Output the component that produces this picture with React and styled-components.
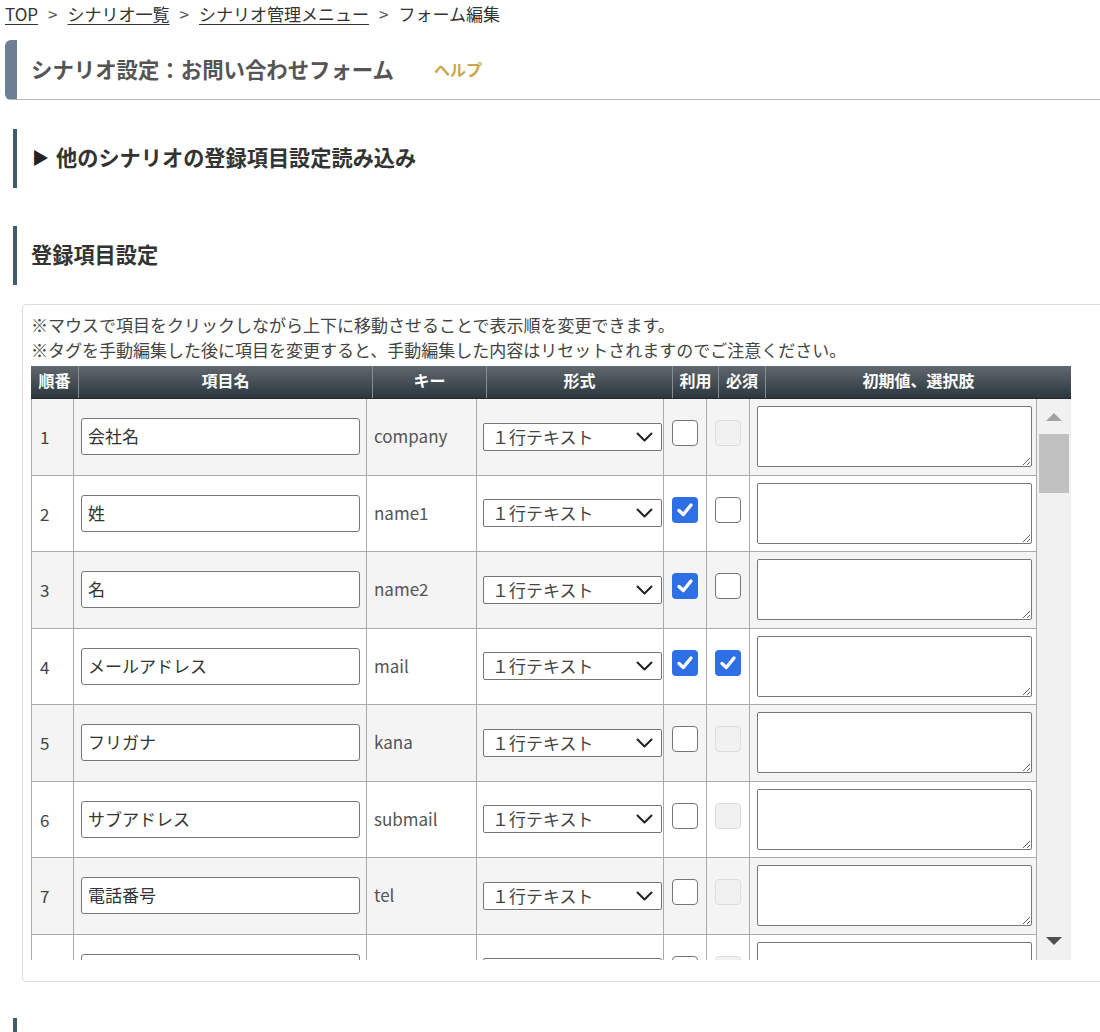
import styled, { createGlobalStyle } from "styled-components";

const GlobalStyle = createGlobalStyle`
  html, body {
    margin: 0;
    padding: 0;
    background: #fff;
    overflow-x: hidden;
  }
  body {
    font-family: "Noto Sans CJK JP", "Noto Sans", sans-serif;
    color: #333;
  }
  * { box-sizing: border-box; }
`;

const Page = styled.div`
  width: 1100px;
  overflow: hidden;
`;

const Breadcrumb = styled.div`
  padding: 2px 5px 0;
  height: 27px;
  font-size: 17px;
  line-height: 24px;
  color: #333;
  white-space: nowrap;
  a {
    color: #333;
    text-decoration: underline;
    text-underline-offset: 3px;
  }
  .sep {
    margin: 0 10px;
    color: #555;
  }
`;

const TitleBox = styled.div`
  margin: 13px 0 0 5px;
  height: 60px;
  display: flex;
  align-items: center;
  padding: 0 0 3px 14px;
  border-left: 12px solid #6d7f93;
  border-bottom: 1px solid #b8b8b8;
  border-radius: 6px 0 0 6px;
  h1 {
    margin: 0;
    font-size: 21.4px;
    font-weight: bold;
    color: #555;
  }
  a {
    margin-left: 40px;
    margin-top: 2px;
    font-size: 16px;
    font-weight: bold;
    color: #c9a84c;
    text-decoration: none;
  }
`;

const Section = styled.h2`
  margin: ${({ $top }) => $top}px 0 0 13px;
  height: 59px;
  display: flex;
  align-items: center;
  padding: 0 0 5px ${({ $pad }) => $pad || 14}px;
  border-left: 4px solid #3f5e69;
  font-size: 21.2px;
  font-weight: bold;
  color: #333;
  .tri {
    font-size: 17px;
    margin-right: 7px;
    color: #222;
  }
`;

const Panel = styled.div`
  margin: 19px 0 0 22px;
  width: 1100px;
  border: 1px solid #dcdcdc;
  border-radius: 4px;
  padding: 7px 8px 21px;
`;

const Note = styled.p`
  margin: 0;
  font-size: 17px;
  line-height: 25px;
  color: #444;
  white-space: nowrap;
`;

const HeadRow = styled.div`
  margin-top: 4px;
  width: 1040px;
  height: 33px;
  display: grid;
  grid-template-columns: 47px 294px 114px 186px 46px 47px 306px;
  background: linear-gradient(#61686e, #2b363d);
  border-bottom: 1px solid #222b31;
`;

const HeadCell = styled.div`
  display: flex;
  align-items: center;
  justify-content: center;
  padding-bottom: 4px;
  color: #fff;
  font-size: 16px;
  font-weight: bold;
  border-left: ${({ $first }) => ($first ? "none" : "1px solid #858c92")};
`;

const Body = styled.div`
  width: 1040px;
  height: 561px;
  display: flex;
  overflow: hidden;
`;

const Table = styled.div`
  width: 1006px;
  border-left: 1px solid #aaa;
  border-right: 1px solid #aaa;
`;

const Row = styled.div`
  height: 76.5px;
  display: grid;
  grid-template-columns: 42px 293px 110px 187px 43px 43px 286px;
  border-bottom: 1px solid #aaa;
  background: ${({ $odd }) => ($odd ? "#f3f4f3" : "#fff")};
`;

const Cell = styled.div`
  display: flex;
  align-items: center;
  padding-left: ${({ $pad }) => $pad}px;
  border-right: ${({ $last }) => ($last ? "none" : "1px solid #aaa")};
  font-size: 17px;
  color: #444;
`;

const Key = styled.span`
  margin-top: -2px;
  color: #555;
`;

const TextInput = styled.input`
  width: 279px;
  height: 37px;
  border: 1px solid #777;
  border-radius: 3px;
  padding: 0 0 2px 6px;
  font-family: inherit;
  font-size: 17px;
  color: #333;
  background: #fff;
`;

const SelectWrap = styled.div`
  position: relative;
  width: 179px;
  height: 28px;
  svg {
    position: absolute;
    right: 9px;
    top: 9px;
    pointer-events: none;
  }
`;

const Select = styled.select`
  appearance: none;
  width: 100%;
  height: 100%;
  border: 1px solid #767676;
  border-radius: 2px;
  padding: 0 0 2px 8px;
  font-family: inherit;
  font-size: 17px;
  color: #444;
  background: #fff;
`;

const Check = styled.span`
  margin-top: -7px;
  width: 26px;
  height: 26px;
  border-radius: 4px;
  display: flex;
  align-items: center;
  justify-content: center;
  border: ${({ $on, $disabled }) =>
    $on ? "none" : $disabled ? "1px solid #dcdcdc" : "1.5px solid #767676"};
  background: ${({ $on, $disabled }) =>
    $on ? "#2f6fe6" : $disabled ? "#f1f1f1" : "#fff"};
`;

const TextArea = styled.textarea`
  width: 275px;
  height: 61px;
  border: 1px solid #777;
  border-radius: 2px;
  font-family: inherit;
  font-size: 16px;
  background: #fff;
`;

const Scrollbar = styled.div`
  width: 34px;
  height: 100%;
  background: #f1f1f1;
  display: flex;
  flex-direction: column;
  align-items: center;
`;

const Arrow = styled.div`
  height: ${({ $h }) => $h}px;
  display: flex;
  align-items: center;
  justify-content: center;
  &::before {
    content: "";
    border-left: 8px solid transparent;
    border-right: 8px solid transparent;
    ${({ $down }) =>
      $down
        ? "border-top: 8px solid #505050;"
        : "border-bottom: 8px solid #a3a3a3;"}
  }
`;

const Thumb = styled.div`
  width: 30px;
  height: 59px;
  background: #c1c1c1;
`;

const Spacer = styled.div`
  flex: 1;
`;

const headers = ["順番", "項目名", "キー", "形式", "利用", "必須", "初期値、選択肢"];

const rows = [
  { name: "会社名", key: "company", use: false, req: null },
  { name: "姓", key: "name1", use: true, req: false },
  { name: "名", key: "name2", use: true, req: false },
  { name: "メールアドレス", key: "mail", use: true, req: true },
  { name: "フリガナ", key: "kana", use: false, req: null },
  { name: "サブアドレス", key: "submail", use: false, req: null },
  { name: "電話番号", key: "tel", use: false, req: null },
  { name: "", key: "", use: false, req: null },
];

function Box({ on, disabled }) {
  return (
    <Check $on={on} $disabled={disabled}>
      {on && (
        <svg width="20" height="20" viewBox="0 0 20 20">
          <path
            d="M4 10.5 L8.3 14.5 L16 5"
            fill="none"
            stroke="#fff"
            strokeWidth="3.4"
            strokeLinecap="round"
            strokeLinejoin="round"
          />
        </svg>
      )}
    </Check>
  );
}

function Chevron() {
  return (
    <svg width="17" height="10" viewBox="0 0 17 10">
      <path
        d="M1.5 1.5 L8.5 8.5 L15.5 1.5"
        fill="none"
        stroke="#222"
        strokeWidth="2"
        strokeLinecap="round"
        strokeLinejoin="round"
      />
    </svg>
  );
}

export default function App() {
  return (
    <Page>
      <GlobalStyle />
      <Breadcrumb>
        <a href="#">TOP</a>
        <span className="sep">&gt;</span>
        <a href="#">シナリオ一覧</a>
        <span className="sep">&gt;</span>
        <a href="#">シナリオ管理メニュー</a>
        <span className="sep">&gt;</span>
        フォーム編集
      </Breadcrumb>

      <TitleBox>
        <h1>シナリオ設定：お問い合わせフォーム</h1>
        <a href="#">ヘルプ</a>
      </TitleBox>

      <Section $top={29} $pad={15}>
        <span className="tri">▶</span>他のシナリオの登録項目設定読み込み
      </Section>

      <Section $top={38}>登録項目設定</Section>

      <Panel>
        <Note>※マウスで項目をクリックしながら上下に移動させることで表示順を変更できます。</Note>
        <Note>※タグを手動編集した後に項目を変更すると、手動編集した内容はリセットされますのでご注意ください。</Note>

        <HeadRow>
          {headers.map((h, i) => (
            <HeadCell key={h} $first={i === 0}>
              {h}
            </HeadCell>
          ))}
        </HeadRow>

        <Body>
          <Table>
            {rows.map((r, i) => (
              <Row key={i} $odd={i % 2 === 0}>
                <Cell $pad={8}>{i < 7 ? i + 1 : ""}</Cell>
                <Cell $pad={7}>
                  <TextInput defaultValue={r.name} />
                </Cell>
                <Cell $pad={7}>
                  <Key>{r.key}</Key>
                </Cell>
                <Cell $pad={6}>
                  <SelectWrap>
                    <Select defaultValue="text">
                      <option value="text">１行テキスト</option>
                    </Select>
                    <Chevron />
                  </SelectWrap>
                </Cell>
                <Cell $pad={8}>
                  <Box on={r.use} />
                </Cell>
                <Cell $pad={8}>
                  <Box on={r.req === true} disabled={r.req === null} />
                </Cell>
                <Cell $pad={7} $last>
                  <TextArea />
                </Cell>
              </Row>
            ))}
          </Table>
          <Scrollbar>
            <Arrow $h={35} />
            <Thumb />
            <Spacer />
            <Arrow $h={38} $down />
          </Scrollbar>
        </Body>
      </Panel>

      <Section $top={36} />
    </Page>
  );
}
